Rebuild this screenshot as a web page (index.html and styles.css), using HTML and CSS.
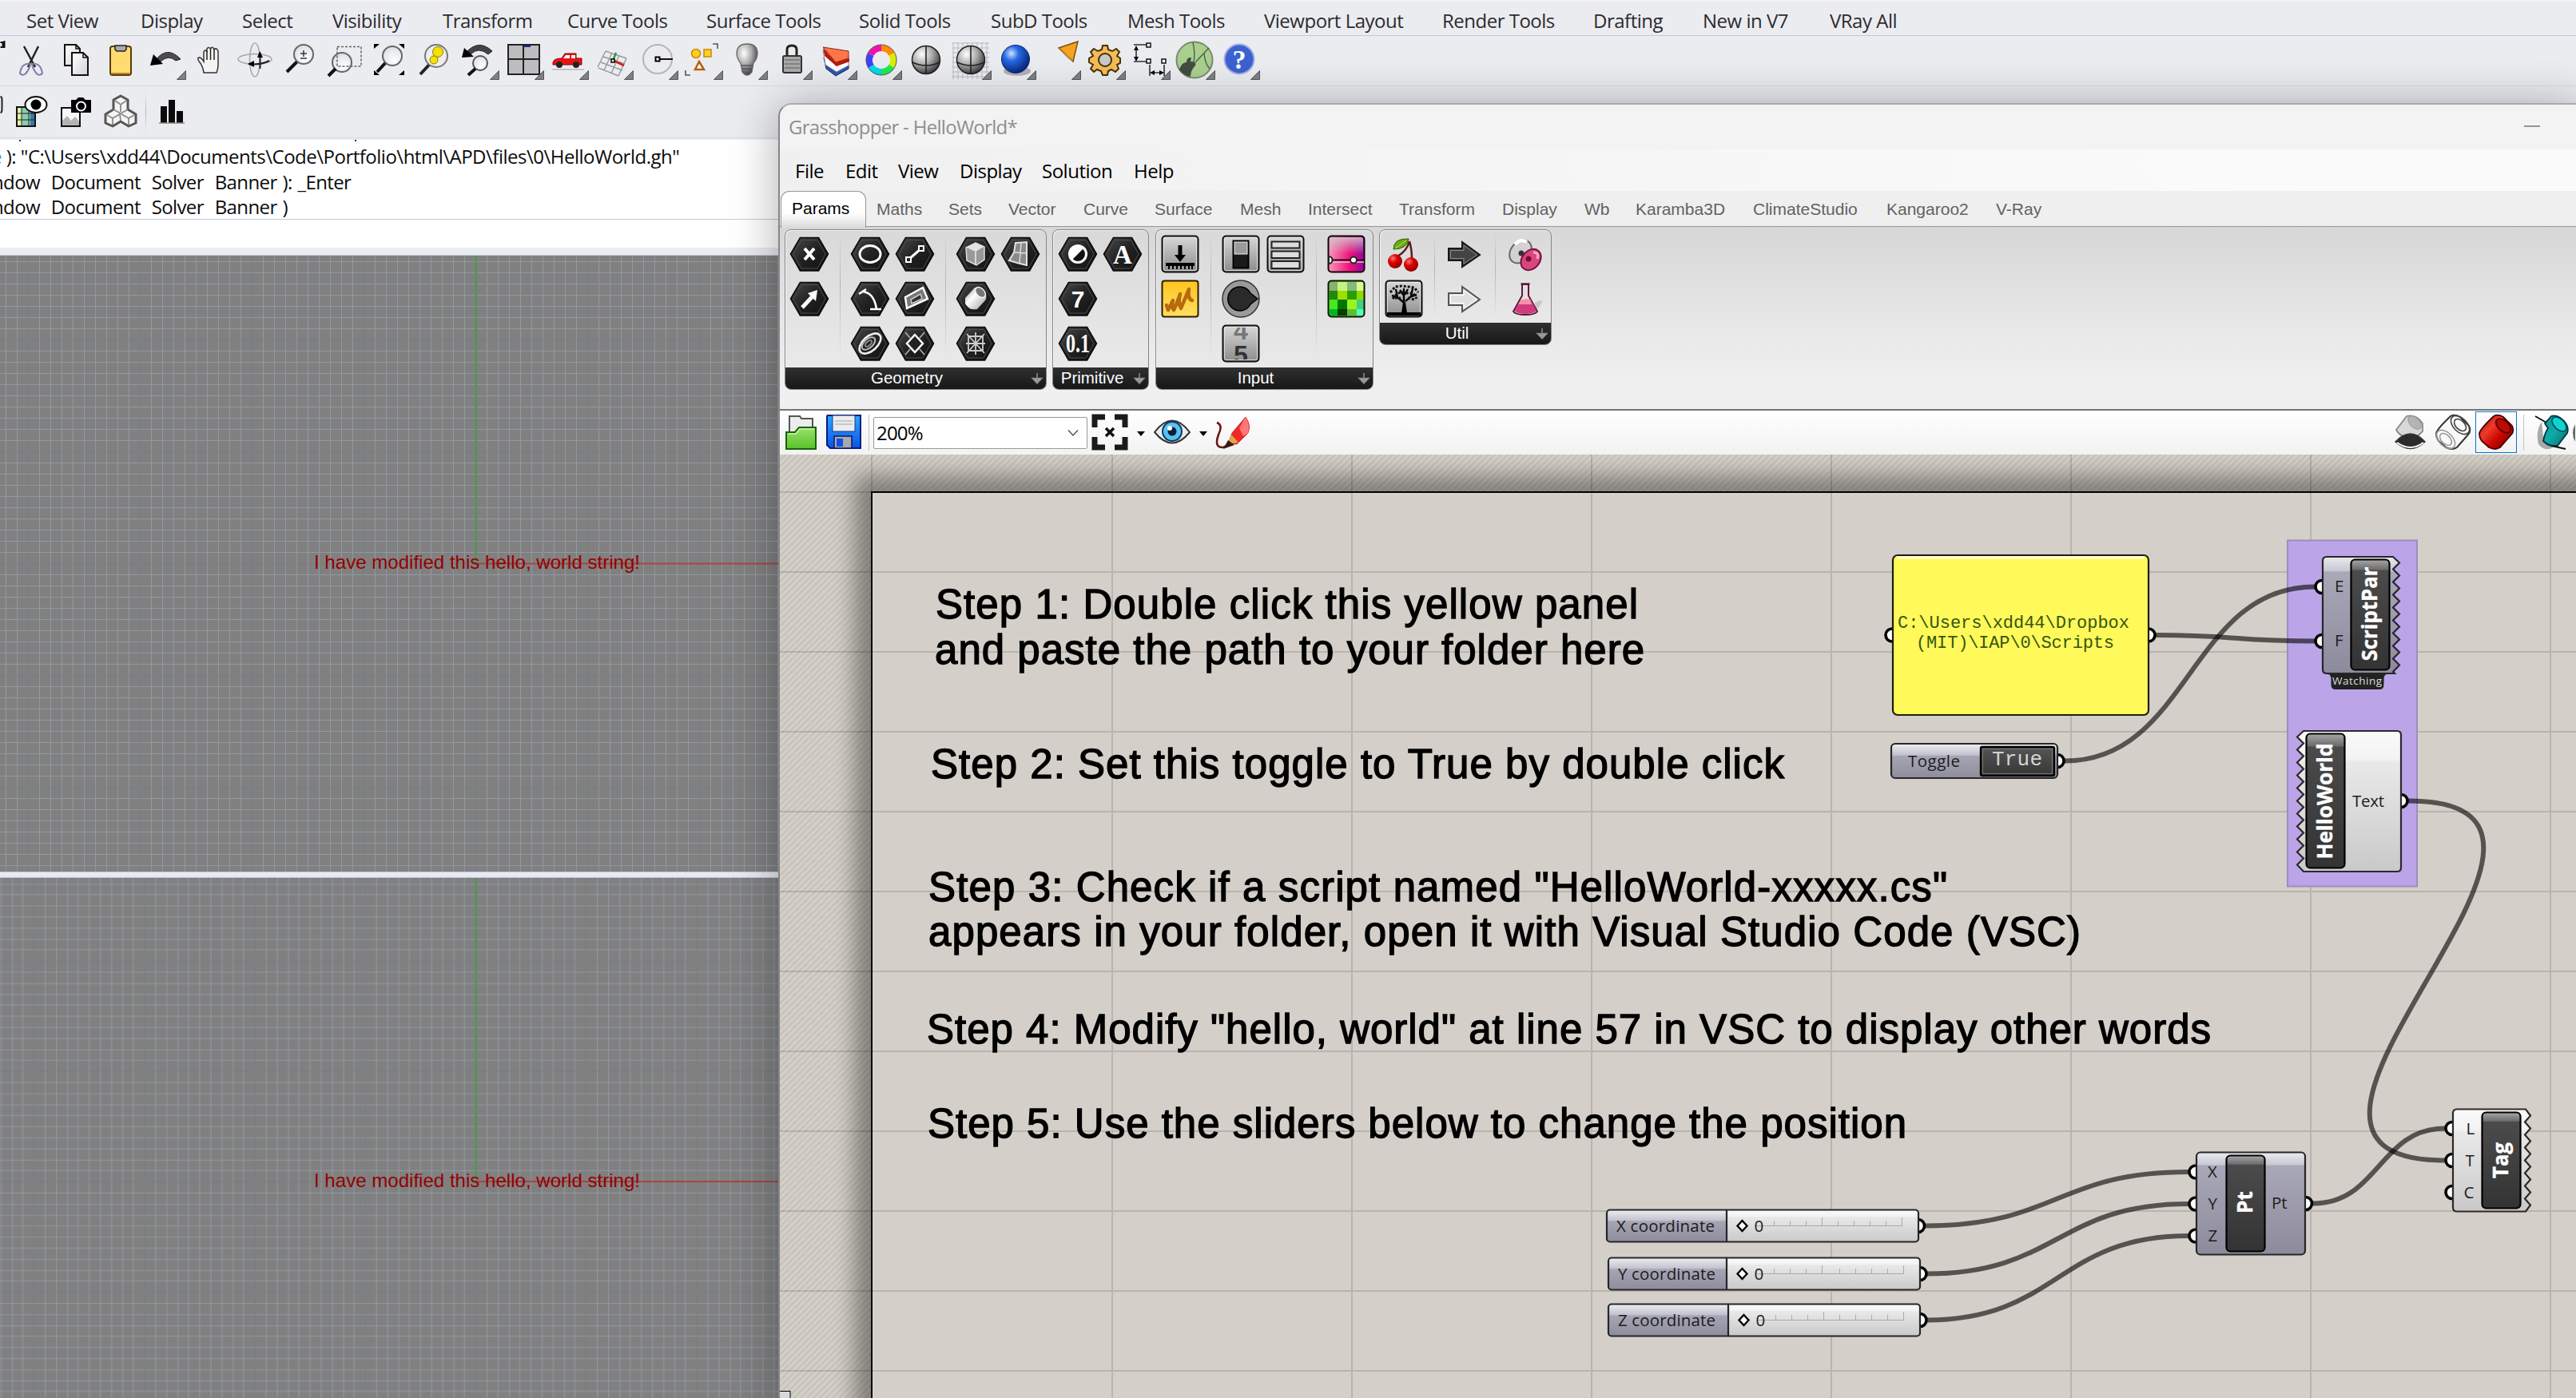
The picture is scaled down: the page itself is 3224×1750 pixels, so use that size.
FILE: index.html
```html
<!DOCTYPE html>
<html lang="en">
<head>
<meta charset="utf-8">
<title>Grasshopper - HelloWorld*</title>
<link rel="stylesheet" href="styles.css">
</head>
<body>
<svg class="defs" aria-hidden="true">
  <defs>
    <linearGradient id="gHex" x1="0" y1="0" x2="1" y2="1"><stop offset="0" stop-color="#4a4a4a"/><stop offset=".5" stop-color="#222"/><stop offset="1" stop-color="#101010"/></linearGradient>
    <linearGradient id="gBtn" x1="0" y1="0" x2="0" y2="1"><stop offset="0" stop-color="#d8d8d8"/><stop offset="1" stop-color="#8c8c8c"/></linearGradient>
    <linearGradient id="gWhite" x1="0" y1="0" x2="1" y2="1"><stop offset="0" stop-color="#8a8a8a"/><stop offset=".4" stop-color="#fff"/><stop offset="1" stop-color="#9a9a9a"/></linearGradient>
    <linearGradient id="gPink" x1="0" y1="0" x2="1" y2="0"><stop offset="0" stop-color="#f39ab8"/><stop offset=".6" stop-color="#f0107c"/><stop offset="1" stop-color="#8c0a9c"/></linearGradient>
    <linearGradient id="gFade" x1="0" y1="0" x2="0" y2="1"><stop offset="0" stop-color="#ccc" stop-opacity=".85"/><stop offset=".5" stop-color="#ccc" stop-opacity="0"/></linearGradient>
    <linearGradient id="gYel" x1="0" y1="0" x2="0" y2="1"><stop offset="0" stop-color="#ffc51e"/><stop offset="1" stop-color="#ffe060"/></linearGradient>
    <linearGradient id="gPaper" x1="0" y1="0" x2="1" y2="1"><stop offset="0" stop-color="#fff"/><stop offset="1" stop-color="#d4d4d4"/></linearGradient>
    <radialGradient id="gLens" cx=".6" cy=".7" r=".7"><stop offset="0" stop-color="#fff"/><stop offset="1" stop-color="#dcdfe2"/></radialGradient>
    <radialGradient id="gBall" cx=".35" cy=".3" r=".75"><stop offset="0" stop-color="#fff"/><stop offset=".5" stop-color="#aaa"/><stop offset="1" stop-color="#333"/></radialGradient>
    <radialGradient id="gBlue" cx=".35" cy=".3" r=".75"><stop offset="0" stop-color="#cfe2ff"/><stop offset=".35" stop-color="#2a6ae6"/><stop offset="1" stop-color="#04206e"/></radialGradient>
    <radialGradient id="gRed" cx=".35" cy=".3" r=".75"><stop offset="0" stop-color="#ff7a70"/><stop offset=".4" stop-color="#de0000"/><stop offset="1" stop-color="#8a0000"/></radialGradient>
    <linearGradient id="gGreen" x1="0" y1="0" x2="0" y2="1"><stop offset="0" stop-color="#9ae06a"/><stop offset="1" stop-color="#5ac22a"/></linearGradient>
    <linearGradient id="gDisk" x1="0" y1="0" x2="0" y2="1"><stop offset="0" stop-color="#2aa6ff"/><stop offset="1" stop-color="#0f52e8"/></linearGradient>
    <linearGradient id="gCylR" x1="0" y1="0" x2="1" y2="1"><stop offset="0" stop-color="#a80400"/><stop offset=".35" stop-color="#ee3a2c"/><stop offset=".6" stop-color="#cc0800"/><stop offset="1" stop-color="#5c0000"/></linearGradient>
    <linearGradient id="gTeal" x1="0" y1="0" x2="1" y2="1"><stop offset="0" stop-color="#0a9a96"/><stop offset=".5" stop-color="#10aaa6"/><stop offset="1" stop-color="#056a68"/></linearGradient>
    <linearGradient id="gLight" x1="0" y1="0" x2="0" y2="1"><stop offset="0" stop-color="#fafafa"/><stop offset=".2" stop-color="#f3f3f3"/><stop offset=".22" stop-color="#e9e9e9"/><stop offset="1" stop-color="#c9c9c9"/></linearGradient>
    <linearGradient id="gBlueGrey" x1="0" y1="0" x2="0" y2="1"><stop offset="0" stop-color="#eaeaf0"/><stop offset=".12" stop-color="#c8c8d2"/><stop offset=".13" stop-color="#a9a8b8"/><stop offset="1" stop-color="#8d8b9b"/></linearGradient>
    <linearGradient id="gBlueGreyS" x1="0" y1="0" x2="0" y2="1"><stop offset="0" stop-color="#eeeef3"/><stop offset=".33" stop-color="#c2c2cd"/><stop offset=".36" stop-color="#a6a5b5"/><stop offset="1" stop-color="#8f8d9c"/></linearGradient>
    <linearGradient id="gCaps" x1="0" y1="0" x2="0" y2="1"><stop offset="0" stop-color="#a8a8a8"/><stop offset=".09" stop-color="#6c6c6c"/><stop offset=".1" stop-color="#4b4b4b"/><stop offset="1" stop-color="#333"/></linearGradient>
    <linearGradient id="gTog" x1="0" y1="0" x2="0" y2="1"><stop offset="0" stop-color="#555"/><stop offset="1" stop-color="#363636"/></linearGradient>
    <pattern id="gridA" x="595" y="705" width="140" height="140" patternUnits="userSpaceOnUse">
      <path d="M14 0V140M28 0V140M42 0V140M56 0V140M70 0V140M84 0V140M98 0V140M112 0V140M126 0V140M0 14H140M0 28H140M0 42H140M0 56H140M0 70H140M0 84H140M0 98H140M0 112H140M0 126H140" transform="translate(.5 .5)" stroke="#9299a2"/>
      <path d="M.5 0V140M0 .5H140" stroke="#797e82"/>
    </pattern>
    <pattern id="gridB" x="595" y="1479" width="138.2" height="138.2" patternUnits="userSpaceOnUse">
      <path d="M14 0V140M28 0V140M42 0V140M55 0V140M69 0V140M83 0V140M97 0V140M111 0V140M124 0V140M0 14H140M0 28H140M0 42H140M0 55H140M0 69H140M0 83H140M0 97H140M0 111H140M0 124H140" transform="translate(.5 .5)" stroke="#9299a2"/>
      <path d="M.5 0V140M0 .5H140" stroke="#797e82"/>
    </pattern>
    <pattern id="hatch" width="8" height="8" patternUnits="userSpaceOnUse">
      <rect width="8" height="8" fill="#d4d0c8"/><path d="M-2 10L10 -2M-2 2L2 -2M6 10L10 6" stroke="#c7c3bb" stroke-width="2.4"/>
    </pattern>
    <filter id="soft" x="-10%" y="-10%" width="120%" height="120%"><feGaussianBlur stdDeviation="13"/></filter>
    <symbol id="hex" viewBox="0 0 56 56"><path d="M4.5 28L16.4 7.500H39.600L51.500 28L39.600 49H16.400Z" fill="url(#gHex)" stroke="#0a0a0a" stroke-width="1.500"/><path d="M8 28L18 10.500H38L48 28L38 46H18Z" fill="none" stroke="#4d4d4d"/></symbol>
    <symbol id="btn" viewBox="0 0 56 56"><rect x="5.500" y="5.500" width="45" height="45" rx="4" fill="url(#gBtn)" stroke="#111" stroke-width="2"/><rect x="7.500" y="7.500" width="41" height="41" rx="2" fill="none" stroke="#f2f2f2" stroke-opacity=".7"/></symbol>
    <symbol id="tri" viewBox="0 0 56 56"><path d="M42.500 51.500H53.500V40.500Z" fill="#808184" stroke="#55565a"/></symbol>
    <symbol id="down" viewBox="0 0 16 16"><path d="M8 1V12M2 7.500H14L8 14Z" stroke="#8e8e8e" stroke-width="1.500" fill="#a2a2a2"/></symbol>
    <clipPath id="rollClip"><rect x="8" y="8" width="40" height="40"/></clipPath>
  </defs>
</svg>

<div class="desktop">
  <div class="rhino">
    <nav class="r-menu">
      <span>Set View</span><span>Display</span><span>Select</span><span>Visibility</span><span>Transform</span><span>Curve Tools</span><span>Surface Tools</span><span>Solid Tools</span><span>SubD Tools</span><span>Mesh Tools</span><span>Viewport Layout</span><span>Render Tools</span><span>Drafting</span><span>New in V7</span><span>VRay All</span>
    </nav>
    <div class="r-bar">
      <svg class="edge" viewBox="0 0 10 56"><path d="M0 5h3v6H0M5 3V12" stroke="#111" stroke-width="2" fill="none"/></svg>
      <svg viewBox="0 0 56 56"><path d="M19 10L33 36M37 10L24 36" stroke="#222" stroke-width="2.500"/><path d="M27 32Q16 30 14 44Q20 50 26 36ZM29 32Q40 30 42 44Q36 50 30 36Z" fill="none" stroke="#7c80a8" stroke-width="2"/></svg>
      <svg viewBox="0 0 56 56"><path d="M14 8H28L33 13V34H14Z" fill="url(#gPaper)" stroke="#111" stroke-width="2"/><path d="M23 18H37L43 24V46H23Z" fill="url(#gPaper)" stroke="#111" stroke-width="2"/><path d="M28 8V13H33M37 18V24H43" fill="none" stroke="#111" stroke-width="1.500"/></svg>
      <svg viewBox="0 0 56 56"><rect x="15" y="10" width="26" height="36" rx="3" fill="#ffdb70" stroke="#5a3c08" stroke-width="2"/><path d="M16 44H40" stroke="#b8862a" stroke-width="2"/><path d="M21 9H35V14L33 16H23L21 14Z" fill="#aaa" stroke="#222" stroke-width="1.500"/></svg>
      <svg viewBox="0 0 56 56"><path d="M15 28Q30 8 47 26L41 28Q32 20 22 29Z" fill="#4c4c4c" stroke="#222"/><path d="M9 34L13 20L25 32Z" fill="#000"/><use href="#tri"/></svg>
      <svg viewBox="0 0 56 56"><path d="M20 43Q19 35 15 30Q11 25 14 24Q17 24 20 29V17Q22 13 24 17V13Q26 10 28.500 13Q31 9 33 14Q36 11 38 16V33Q38 38 36 43Z" fill="#f4f4f2" stroke="#333" stroke-width="1.500"/><path d="M24 16V27M28.500 13V27M33 14V27" stroke="#222" stroke-width="1.500"/></svg>
      <svg viewBox="0 0 56 56"><ellipse cx="28" cy="26" rx="21" ry="6.500" fill="none" stroke="#aaa" stroke-width="1.600"/><ellipse cx="28" cy="27" rx="6.500" ry="21" fill="none" stroke="#aaa" stroke-width="1.600"/><path d="M34.500 18V38M20 32Q34 34 46 28" fill="none" stroke="#222" stroke-width="2"/><path d="M31 24L34 16L38 24ZM19 32L27 28V36Z" fill="#000"/></svg>
      <svg viewBox="0 0 56 56"><path d="M25 29L12 42" stroke="#111" stroke-width="4"/><circle cx="33" cy="20" r="12" fill="url(#gLens)" stroke="#666" stroke-width="2"/><path d="M29 19H37M33 15V23M29 25H37" stroke="#333" stroke-width="1.500"/></svg>
      <svg viewBox="0 0 56 56"><circle cx="25" cy="30" r="12" fill="url(#gLens)" stroke="#666" stroke-width="2"/><path d="M17 38L8 47" stroke="#111" stroke-width="4"/><path d="M19 10.500H49V35H19Z" fill="none" stroke="#666" stroke-width="1.600" stroke-dasharray="3 2"/></svg>
      <svg viewBox="0 0 56 56"><path d="M24 30L13 42" stroke="#111" stroke-width="4"/><circle cx="32" cy="22" r="12" fill="url(#gLens)" stroke="#666" stroke-width="2"/><path d="M9 7H16L9 13ZM47 7H40L47 13ZM9 46H16L9 40ZM47 46H40L47 40Z" fill="#000"/></svg>
      <svg viewBox="0 0 56 56"><path d="M24 31L11 45" stroke="#222" stroke-width="4"/><circle cx="31" cy="22" r="14" fill="#eee" stroke="#777" stroke-width="2"/><circle cx="33" cy="17" r="6.500" fill="#f6e000" stroke="#8a8000"/><circle cx="28" cy="27" r="5" fill="#f6e000" stroke="#8a8000"/></svg>
      <svg viewBox="0 0 56 56"><path d="M12 18Q28 0 45 16L40 20Q28 10 18 20Z" fill="#444" stroke="#222"/><path d="M7 24L10 12L22 23Z"/><circle cx="30" cy="31" r="9" fill="url(#gLens)" stroke="#555" stroke-width="2"/><path d="M24 38L15 46" stroke="#111" stroke-width="4"/><use href="#tri"/></svg>
      <svg viewBox="0 0 56 56"><rect x="9" y="8" width="39" height="37" fill="#bdbdbf" stroke="#222" stroke-width="2"/><path d="M28 8V45M9 26H48" stroke="#222" stroke-width="2"/><path d="M29 10H37" stroke="#1028a0" stroke-width="2"/><use href="#tri"/></svg>
      <svg viewBox="0 0 56 56"><path d="M9 31Q9 25 20 25L24 19H38V25H45V33H9Z" fill="#e81414" stroke="#8a0000"/><path d="M25 21H30V25H22ZM32 21H37V25H32Z" fill="#fff"/><circle cx="17" cy="33" r="4" fill="#222"/><circle cx="38" cy="33" r="4" fill="#222"/><path d="M8 39H48" stroke="#c4c4c8" stroke-width="2"/><use href="#tri"/></svg>
      <svg viewBox="0 0 56 56"><path d="M19 16L45 25M16 23L43 32M13 30L40 40M10 37L35 47M19 16L9 36M27 18L17 40M36 21L26 44M45 25L35 47" stroke="#999" stroke-width="1.400"/><path d="M29 28L42 34" stroke="#d02020" stroke-width="2.500"/><path d="M28 28L32 18" stroke="#20a040" stroke-width="2.500"/><rect x="26" y="26" width="4" height="4" fill="#fff" stroke="#000" stroke-width="1.500"/><use href="#tri"/></svg>
      <svg viewBox="0 0 56 56"><circle cx="28" cy="26" r="18" fill="none" stroke="#b5b5b8" stroke-width="2"/><path d="M30 26H47" stroke="#111" stroke-width="2"/><rect x="25.500" y="23.500" width="5" height="5" fill="#fff" stroke="#000" stroke-width="2"/><use href="#tri"/></svg>
      <svg viewBox="0 0 56 56"><circle cx="20" cy="19" r="5.500" fill="#ffd21e" stroke="#c8860a" stroke-width="1.500"/><rect x="30" y="14" width="9" height="9" fill="#ffd21e" stroke="#c8860a" stroke-width="1.500"/><path d="M19 39L24 29L30 39Z" fill="#fff" stroke="#b85c10" stroke-width="2.500"/><path d="M41 7H47V13M7 40V46H13" fill="none" stroke="#555" stroke-width="1.600"/><use href="#tri"/></svg>
      <svg viewBox="0 0 56 56"><path d="M15 19Q15 7 28 7Q41 7 41 19Q41 25 36 31L34 42Q28 50 22 42L20 31Q15 25 15 19Z" fill="url(#gBall)" stroke="#666" stroke-width="1.300"/><path d="M21 34H35M22 38H34" stroke="#555" stroke-width="1.500"/><use href="#tri"/></svg>
      <svg viewBox="0 0 56 56"><path d="M22 24V14Q22 9 28 9Q34 9 34 14V24" fill="none" stroke="#222" stroke-width="3"/><rect x="17" y="22" width="23" height="21" rx="2" fill="#a8a8a8" stroke="#333" stroke-width="2"/><path d="M19 27H38M19 32H38M19 37H38" stroke="#777" stroke-width="1.500"/><use href="#tri"/></svg>
      <svg viewBox="0 0 56 56"><path d="M12 24L27 40L43 34V38L27 47L15 38Z" fill="#2a55b8" stroke="#112a70"/><path d="M11 15L27 34L43 29V34L28 42L14 33Z" fill="#fff" stroke="#888"/><path d="M11 12L27 30L44 25V29L28 35L13 22Z" fill="#b81a10"/><path d="M11 11L43 16V25L27 30Z" fill="#ff7648" stroke="#8a2a14"/><use href="#tri"/></svg>
      <svg viewBox="0 0 56 56"><g fill="none" stroke-width="8"><path d="M28 12A15 15 0 0 1 41 20" stroke="#ff8a00"/><path d="M41 20A15 15 0 0 1 41 35" stroke="#d8f000"/><path d="M41 35A15 15 0 0 1 28 42" stroke="#20e850"/><path d="M28 42A15 15 0 0 1 15 35" stroke="#00d8e8"/><path d="M15 35A15 15 0 0 1 15 20" stroke="#4040ff"/><path d="M15 20A15 15 0 0 1 28 12" stroke="#f010b0"/></g><circle cx="28" cy="27" r="19" fill="none" stroke="#555"/><use href="#tri"/></svg>
      <svg viewBox="0 0 56 56"><circle cx="28" cy="27" r="17.500" fill="url(#gBall)" stroke="#222" stroke-width="1.500"/><path d="M28 10V44M11 30Q28 38 45 30" fill="none" stroke="#222" stroke-width="1.600"/></svg>
      <svg viewBox="0 0 56 56"><path d="M6 5V51M12 5V51M18 5V51M24 5V51M30 5V51M36 5V51M42 5V51M48 5V51M5 6H51M5 12H51M5 18H51M5 24H51M5 30H51M5 36H51M5 42H51M5 48H51" stroke="#b8b8bc"/><circle cx="28" cy="27" r="17.500" fill="url(#gBall)" stroke="#222" stroke-width="1.500"/><path d="M28 10V44M11 30Q28 38 45 30" fill="none" stroke="#222" stroke-width="1.600"/><use href="#tri"/></svg>
      <svg viewBox="0 0 56 56"><ellipse cx="30" cy="41" rx="17" ry="6" fill="#000" opacity=".25"/><circle cx="28" cy="26" r="17.500" fill="url(#gBlue)" stroke="#0a2a78"/><use href="#tri"/></svg>
      <svg viewBox="0 0 56 56"><path d="M26 12L50 4L44 29Z" fill="#f7a21e" stroke="#7a5010" stroke-width="1.500"/><path d="M26 12L44 29L37 24Z" fill="#fff8e0" stroke="#a08040"/><use href="#tri"/></svg>
      <svg viewBox="0 0 56 56"><path d="M25 9H31L32 14L37 16L42 13L46 17L43 22L47 25V31L43 33L45 38L41 42L36 39L32 41L31 46H25L23 41L18 39L14 42L10 38L13 33L8 30V25L13 22L10 17L14 13L19 16L24 14Z" fill="#f2bc58" stroke="#4a3008" stroke-width="2"/><circle cx="28" cy="27" r="8" fill="#c9c9cc" stroke="#4a3008" stroke-width="2"/><use href="#tri"/></svg>
      <svg viewBox="0 0 56 56"><path d="M8 8H26M8 29H26M11 12V26M28 33V47M46 33V47M33 43H42" stroke="#333" stroke-width="1.600" fill="none"/><path d="M8 15L11 9L14 15ZM8 23L11 29L14 23ZM34 40L28 43L34 46ZM40 40L46 43L40 46Z"/><path d="M24 6h5v5h-5ZM24 26h5v5h-5ZM43 26h5v5h-5Z" fill="#fff" stroke="#111" stroke-width="1.500"/><use href="#tri"/></svg>
      <svg viewBox="0 0 56 56"><circle cx="28" cy="27" r="22.500" fill="#a9cf8e" stroke="#7a8a72" stroke-width="2"/><path d="M9 39Q12 30 18 30Q18 23 24 24L23 29Q31 29 29 34Q23 40 23 48Q13 46 9 39Z" fill="#444c40"/><path d="M26 5Q29 18 27 30M29 30L46 12M40 18Q41 32 47 38" fill="none" stroke="#4f6148" stroke-width="1.400"/><use href="#tri"/></svg>
      <svg viewBox="0 0 56 56"><circle cx="28" cy="26" r="18.500" fill="#3c62d0" stroke="#a0aee4" stroke-width="2"/><text x="28" y="38" class="help-q">?</text><use href="#tri"/></svg>
    </div>
    <div class="r-bar r-bar2">
      <svg class="edge" viewBox="0 0 10 56"><path d="M0 8Q2 8 2 12V24Q2 28 0 28" stroke="#222" stroke-width="2" fill="none"/></svg>
      <svg viewBox="0 0 56 56"><rect x="10" y="21" width="23" height="24" fill="#8accb0" stroke="#111" stroke-width="2"/><path d="M11 22H16V44H11Z" fill="#e4f0a0"/><path d="M27 22H32V44H27Z" fill="#3a78a8"/><path d="M16 21V45M25 21V45M10 29H33M10 37H33" stroke="#222"/><ellipse cx="34" cy="18" rx="13.500" ry="10" fill="#fff" stroke="#111" stroke-width="2"/><circle cx="34" cy="18" r="6.500"/></svg>
      <svg viewBox="0 0 56 56"><rect x="10" y="22" width="23" height="23" fill="#f6f6f6" stroke="#111" stroke-width="2"/><path d="M11 44V38L17 32L22 38L27 33L32 39V44Z" fill="#b4b4b4"/><path d="M22 12H28L31 9H37L40 12H47V28H22Z"/><circle cx="34.500" cy="20" r="5.500" stroke="#fff" stroke-width="2"/></svg>
      <svg viewBox="0 0 56 56"><path d="M28 7L37 12V24L47 30V41L38 45L28 39L18 45L9 41V30L19 24V12Z" fill="#f4f4f5" stroke="#555" stroke-width="3" stroke-linejoin="round"/><path d="M21 13L28 18L35 13M28 18V27M11 31L18 35L27 30L28 38M45 31L38 35L29 30M18 35V43M38 35V43M19 24L28 29L37 24" fill="none" stroke="#8a8a8a" stroke-width="1.800"/></svg>
      <i class="r-sep"></i>
      <svg viewBox="0 0 56 56"><path d="M15 20H23V41H15ZM25 12H33V41H25ZM35 26H43V41H35Z" fill="#0a0a0a"/><path d="M13 41H45" stroke="#888" stroke-width="1.500"/></svg>
    </div>
    <div class="r-cmd">
      <div class="r-hist">
        <i class="scrap"></i>
        <p class="path"><span class="blue">e</span> ): "C:\Users\xdd44\Documents\Code\Portfolio\html\APD\files\0\HelloWorld.gh"</p>
        <p class="opts">ndow  Document  Solver  Banner ): _Enter</p>
        <p class="opts">ndow  Document  Solver  Banner )</p>
      </div>
      <div class="r-prompt"></div>
    </div>
    <svg class="r-view" viewBox="0 320 976 1430">
      <rect y="320" width="976" height="772" fill="#808080"/>
      <rect y="320" width="976" height="772" fill="url(#gridA)"/>
      <path d="M595.500 320V705" stroke="#469846" stroke-width="2"/><path d="M595 705.500H976" stroke="#a64646" stroke-width="2"/>
      <text x="393" y="712" textLength="408" lengthAdjust="spacingAndGlyphs">I have modified this hello, world string!</text>
      <rect y="1091" width="976" height="8" fill="#e7eaf0"/><path d="M0 1091.500H976M0 1098.500H976" stroke="#bcc5da"/>
      <rect y="1099" width="976" height="651" fill="#808080"/>
      <rect y="1099" width="976" height="651" fill="url(#gridB)"/>
      <path d="M595.500 1099V1479" stroke="#469846" stroke-width="2"/><path d="M595 1479H976" stroke="#a64646" stroke-width="2"/>
      <text x="393" y="1486" textLength="408" lengthAdjust="spacingAndGlyphs">I have modified this hello, world string!</text>
    </svg>
  </div>

  <div class="gh">
    <header class="gh-title"><span>Grasshopper - HelloWorld*</span><i class="min"></i></header>
    <nav class="gh-menu"><span>File</span><span>Edit</span><span>View</span><span>Display</span><span>Solution</span><span>Help</span></nav>
    <nav class="gh-tabs"><b>Params</b><span>Maths</span><span>Sets</span><span>Vector</span><span>Curve</span><span>Surface</span><span>Mesh</span><span>Intersect</span><span>Transform</span><span>Display</span><span>Wb</span><span>Karamba3D</span><span>ClimateStudio</span><span>Kangaroo2</span><span>V-Ray</span></nav>
    <div class="ribbon">
      <section class="group">
        <div class="cells">
          <div class="col">
            <svg viewBox="0 0 56 56"><use href="#hex"/><path d="M22 21L34 35M34 21L22 35" stroke="#fff" stroke-width="4"/></svg>
            <svg viewBox="0 0 56 56"><use href="#hex"/><path d="M19 39L32 25" stroke="#fff" stroke-width="5"/><path d="M26 21L38 17L36 31Z" fill="#fff"/></svg>
          </div><i></i>
          <div class="col two">
            <svg viewBox="0 0 56 56"><use href="#hex"/><ellipse cx="28" cy="28" rx="13" ry="10.500" fill="none" stroke="#fff" stroke-width="3"/></svg>
            <svg viewBox="0 0 56 56"><use href="#hex"/><path d="M18 19Q33 20 36 41M28 41H42M14 22L23 16" fill="none" stroke="#fff" stroke-width="2.600"/></svg>
            <svg viewBox="0 0 56 56"><use href="#hex"/><ellipse cx="28" cy="28" rx="16" ry="9" transform="rotate(-42 28 28)" fill="none" stroke="#eee" stroke-width="2.600"/><ellipse cx="26" cy="28" rx="10" ry="5.500" transform="rotate(-42 26 28)" fill="none" stroke="#bbb" stroke-width="2"/><ellipse cx="26" cy="28" rx="5" ry="2.500" transform="rotate(-42 26 28)" fill="none" stroke="#999" stroke-width="1.500"/></svg>
            <svg viewBox="0 0 56 56"><use href="#hex"/><path d="M20 35L36 21" stroke="#fff" stroke-width="3"/><path d="M33 18h6v6h-6ZM17 32h6v6h-6Z" fill="#222" stroke="#fff" stroke-width="2"/></svg>
            <svg viewBox="0 0 56 56"><use href="#hex"/><path d="M16 26L38 14L44 28L18 40Z" fill="#777" stroke="#fff" stroke-width="2.500"/><path d="M23 29L35 22L37 28L24 34Z" fill="#333" stroke="#ccc" stroke-width="1.500"/></svg>
            <svg viewBox="0 0 56 56"><use href="#hex"/><path d="M28 17L38 28L28 39L18 28Z" fill="#222" stroke="#fff" stroke-width="2.500"/><path d="M16 14L22 21M40 14L34 21M16 42L22 35M40 42L34 35" stroke="#aaa" stroke-width="1.800"/></svg>
          </div><i></i>
          <div class="col two">
            <svg viewBox="0 0 56 56"><use href="#hex"/><path d="M16 20L28 14L39 19V35L29 42L17 36Z" fill="#999" stroke="#ddd" stroke-width="1.500"/><path d="M17 20L28 25L38 19L28 14Z" fill="#e4e4e4"/><path d="M28 25V41" stroke="#eee" stroke-width="1.500"/></svg>
            <svg viewBox="0 0 56 56"><use href="#hex"/><path d="M15 27L27 14Q35 12 41 22Q42 27 40 30L30 41Q20 43 15 34Z" fill="url(#gWhite)"/><ellipse cx="34" cy="20" rx="7.500" ry="5" transform="rotate(45 34 20)" fill="#777" stroke="#f4f4f4" stroke-width="1.500"/></svg>
            <svg viewBox="0 0 56 56"><use href="#hex"/><path d="M19 19H37V37H19ZM28 14V42M16 28H40M17 16L39 40M39 16L17 40" fill="none" stroke="#ccc" stroke-width="1.800"/></svg>
            <svg viewBox="0 0 56 56"><use href="#hex"/><path d="M22 14L36 13V42Q26 40 14 36L20 26Z" fill="#8a8a8a" stroke="#e4e4e4" stroke-width="2"/><path d="M20 26L36 27M29 14L27 39" stroke="#ddd" stroke-width="1.500" fill="none"/></svg>
          </div>
        </div>
        <footer>Geometry<svg viewBox="0 0 16 16"><use href="#down"/></svg></footer>
      </section>
      <section class="group">
        <div class="cells"><div class="col two">
          <svg viewBox="0 0 56 56"><use href="#hex"/><circle cx="28" cy="28" r="10.500" fill="#111" stroke="#fff" stroke-width="3"/><path d="M36 20A11 11 0 0 1 20 36Z" fill="#fff" transform="rotate(180 28 28)"/></svg>
          <svg viewBox="0 0 56 56"><use href="#hex"/><text x="28" y="39" class="glyph">7</text></svg>
          <svg viewBox="0 0 56 56"><use href="#hex"/><text x="28" y="39" class="glyph serif" textLength="30" lengthAdjust="spacingAndGlyphs">0.1</text></svg>
          <svg viewBox="0 0 56 56"><use href="#hex"/><text x="28" y="40" class="glyph serif">A</text></svg>
        </div></div>
        <footer>Primitive<svg viewBox="0 0 16 16"><use href="#down"/></svg></footer>
      </section>
      <section class="group">
        <div class="cells">
          <div class="col">
            <svg viewBox="0 0 56 56"><use href="#btn"/><path d="M28 17V32" stroke="#000" stroke-width="5"/><path d="M21 29H35L28 38ZM10 39H46V43H10Z"/><path d="M14 43V47M19 43V47M24 43V47M29 43V47M34 43V47M39 43V47M43 43V47" stroke="#000" stroke-width="2"/></svg>
            <svg viewBox="0 0 56 56"><rect x="5.500" y="5.500" width="45" height="45" rx="3" fill="url(#gYel)" stroke="#2a1c00" stroke-width="2"/><path d="M11 36L13 42Q16 36 19 30Q17 38 20 42Q24 34 28 22Q25 34 29 40Q34 28 39 16Q37 28 43 30" fill="none" stroke="#b86a10" stroke-width="4.500" stroke-linejoin="round" stroke-linecap="round"/></svg>
          </div><i></i>
          <div class="col two">
            <svg viewBox="0 0 56 56"><use href="#btn"/><rect x="18.500" y="11.500" width="19" height="34" fill="#1a1a1a" stroke="#000" stroke-width="2"/><rect x="20" y="13" width="16" height="15" fill="#9a9a9a" stroke="#eee"/></svg>
            <svg viewBox="0 0 56 56"><circle cx="28" cy="28" r="23" fill="#9a9a9a" stroke="#333" stroke-width="1.500"/><path d="M49 28L40 35A15 15 0 1 1 40 21Z" fill="#2a2a2a" stroke="#000" stroke-width="1.500"/></svg>
            <svg viewBox="0 0 56 56"><use href="#btn"/><g clip-path="url(#rollClip)"><text x="28" y="23" class="roll dim">4</text><text x="28" y="53" class="roll">5</text></g></svg>
            <svg viewBox="0 0 56 56"><use href="#btn"/><path d="M10.500 12.500H45.500V20.500H10.500ZM10.500 24.500H45.500V33H10.500ZM10.500 37H45.500V46H10.500Z" fill="#ddd" stroke="#222" stroke-width="2"/></svg>
          </div><i></i>
          <div class="col">
            <svg viewBox="0 0 56 56"><rect x="5.500" y="5.500" width="45" height="45" rx="4" fill="url(#gPink)" stroke="#1a0010" stroke-width="2"/><rect x="7" y="7" width="42" height="42" rx="3" fill="url(#gFade)"/><path d="M6 35.500H50" stroke="#310018" stroke-width="2"/><path d="M6 38H50" stroke="#fbd" stroke-width="1.500"/><circle cx="37" cy="35.500" r="4" fill="#fff" stroke="#222" stroke-width="2"/><path d="M6 31A4 4 0 0 1 6 40Z" fill="#fff" stroke="#222" stroke-width="2"/></svg>
            <svg viewBox="0 0 56 56"><rect x="5.500" y="5.500" width="45" height="45" rx="4" fill="#7fd030"/><path d="M7 18h10v11H7Z" fill="#1c8a0a"/><path d="M17 18h12v11H17Z" fill="#9be000"/><path d="M29 18h12v11H29Z" fill="#2aa000"/><path d="M41 18h9v11h-9Z" fill="#90dc00"/><path d="M7 29h10v12H7Z" fill="#46e81e"/><path d="M17 29h12v12H17Z" fill="#007800"/><path d="M29 29h12v12H29Z" fill="#9af41e"/><path d="M41 29h9v12h-9Z" fill="#40d080"/><path d="M7 41h10v8H7Z" fill="#00b428"/><path d="M17 41h12v8H17Z" fill="#0c3a00"/><path d="M29 41h12v8H29Z" fill="#5cc034"/><path d="M41 41h9v8h-9Z" fill="#54ffc4"/><path d="M7 7h10v11H7Z" fill="#88b070"/><path d="M17 7h12v11H17Z" fill="#c2f480"/><path d="M29 7h12v11H29Z" fill="#88b880"/><path d="M41 7h9v11h-9Z" fill="#d8fa90"/><rect x="5.500" y="5.500" width="45" height="45" rx="4" fill="none" stroke="#0a1a00" stroke-width="2"/></svg>
          </div>
        </div>
        <footer>Input<svg viewBox="0 0 16 16"><use href="#down"/></svg></footer>
      </section>
      <section class="group short">
        <div class="cells">
          <div class="col">
            <svg viewBox="0 0 56 56"><path d="M35 12Q32 24 20 31M35 12Q38 22 38 34" fill="none" stroke="#5a1a1a" stroke-width="2.500"/><path d="M15 22Q15 8 34 9Q32 22 15 22Z" fill="#6aac10" stroke="#2a5a08"/><path d="M17 21L31 11" stroke="#bde060"/><circle cx="17" cy="37" r="9" fill="url(#gRed)"/><circle cx="37" cy="41" r="9" fill="url(#gRed)"/></svg>
            <svg viewBox="0 0 56 56"><use href="#btn"/><path d="M7 45H49V49H7Z"/><path d="M25 46L27 32H30L32 46Z"/><path d="M28 34V15M27 32L20 26L13 24M20 26L18 16M30 31L37 25L44 23M37 25L39 15M28 24L23 17M29 23L33 16" stroke="#000" stroke-width="2.400" fill="none"/><path d="M11 20L17 13L25 12L34 13L41 14L46 20M14 28L20 21L25 20L33 21L40 21L44 28M17 27L24 27M33 27L41 29" fill="none" stroke="#111" stroke-width="3" stroke-dasharray="3 2"/></svg>
          </div><i></i>
          <div class="col">
            <svg viewBox="0 0 56 56"><path d="M8 21H25V13L47 29L25 44V36H8Z" fill="#444" stroke="#181818" stroke-width="2"/><path d="M10.500 23.500H27V17L43.500 29L27 40V33.500H10.500Z" fill="none" stroke="#888"/></svg>
            <svg viewBox="0 0 56 56"><path d="M8 21H25V13L47 29L25 44V36H8Z" fill="#e0e0e0" stroke="#555" stroke-width="2"/><path d="M10.500 23.500H27V17L43.500 29L27 40V33.500H10.500Z" fill="none" stroke="#fff"/></svg>
          </div><i></i>
          <div class="col">
            <svg viewBox="0 0 56 56"><ellipse cx="22" cy="25" rx="16" ry="12" transform="rotate(-50 22 25)" fill="#d2d2d2" stroke="#666" stroke-width="2"/><path d="M15 16Q22 8 30 13" stroke="#fff" stroke-width="4" fill="none"/><circle cx="23" cy="27" r="3.500" fill="#333"/><ellipse cx="35" cy="35" rx="14.500" ry="11" transform="rotate(-50 35 35)" fill="#d8467e" stroke="#7a1040" stroke-width="2"/><circle cx="32" cy="34" r="3.500" fill="#7a0a38"/><path d="M38 26Q46 26 43 34" stroke="#fac" stroke-width="3" fill="none"/></svg>
            <svg viewBox="0 0 56 56"><path d="M40 33Q52 26 48 34L40 46Z" fill="#bbb" opacity=".7"/><path d="M24 10H32V24L43 44Q40 48 28 48Q16 48 13 44L24 24Z" fill="#e8dce2" stroke="#5a1c3c" stroke-width="2"/><path d="M22 30Q28 33 34 28L42 43Q38 47 28 47Q18 47 14.500 43Z" fill="#d03c7c"/><path d="M22 30Q28 27 34 29L36 35H19Z" fill="#f890ac"/><path d="M22.500 9.500H33.500" stroke="#5a1c3c" stroke-width="2.500"/></svg>
          </div>
        </div>
        <footer>Util<svg viewBox="0 0 16 16"><use href="#down"/></svg></footer>
      </section>
    </div>
    <div class="gh-bar">
      <svg class="ic" viewBox="0 0 46 46"><path d="M8 3H21L23 6H37V26H8Z" fill="#ececec" stroke="#555" stroke-width="2"/><path d="M4 23H15L20 17H41V44H4Z" fill="url(#gGreen)" stroke="#14640c" stroke-width="2"/><path d="M6 25H16L21 19H39" fill="none" stroke="#cff0a8" stroke-width="1.500"/></svg>
      <svg class="ic save" viewBox="0 0 46 46"><path d="M2 3Q2 2 3 2H44V43H6L2 39Z" fill="url(#gDisk)" stroke="#04207a" stroke-width="2"/><rect x="9" y="2" width="28" height="20" fill="#ececec" stroke="#1a3a9a"/><path d="M12 9H34M12 13H34" stroke="#c8c8c8" stroke-width="2"/><rect x="11" y="28" width="22" height="15" fill="#a8a8ac" stroke="#0a1a60" stroke-width="1.500"/><rect x="14" y="31" width="8" height="10" fill="#1050e8"/></svg>
      <i class="gsep"></i>
      <div class="combo"><span>200%</span><svg viewBox="0 0 16 10"><path d="M2 1.500L8 8L14 1.500" fill="none" stroke="#555" stroke-width="1.500"/></svg></div>
      <svg class="ic ext" viewBox="0 0 46 46"><path d="M4 17V4H17M29 4H42V17M42 29V42H29M17 42H4V29" fill="none" stroke="#1a1a1a" stroke-width="7"/><path d="M18 18L28 28M28 18L18 28" stroke="#111" stroke-width="3.500"/></svg>
      <i class="arr"></i>
      <svg class="ic" viewBox="0 0 46 46"><path d="M1 23Q23 -6 45 23Q23 50 1 23Z" fill="#e8eef0" stroke="#333" stroke-width="2"/><circle cx="23" cy="22" r="12" fill="#5cc0ee" stroke="#0a3a6a" stroke-width="2"/><circle cx="23" cy="22" r="5.500" fill="#04203a"/><circle cx="20" cy="18" r="3" fill="#fff"/></svg>
      <i class="arr"></i>
      <svg class="ic brush" viewBox="0 0 46 46"><path d="M3 11Q11 14 5 26Q-1 43 11 42Q15 41 18 36" fill="none" stroke="#6a1410" stroke-width="2.600"/><path d="M17 37L22 24L39 4Q46 14 42 24L28 38Z" fill="#ee2a26" stroke="#c01010" stroke-width=".8"/><path d="M31 18L39 4Q45 14 42 24L36 28Z" fill="#f77"/><path d="M16 38L21 26L30 36Z" fill="#e0a848"/><path d="M11 44L17 33L25 39Z" fill="#3a1a10"/></svg>
      <span class="push"></span>
      <svg class="ic" viewBox="0 0 46 46"><path d="M5 20L18 3Q30 0 38 12V22L28 32Q10 30 5 20Z" fill="#d8d8d8" stroke="#888" stroke-width="1.800"/><ellipse cx="28" cy="11" rx="10" ry="6" transform="rotate(45 28 11)" fill="#b4b4b4" stroke="#999"/><path d="M4 35Q23 52 41 35Q23 15 4 35Z" fill="#2c2c2c" stroke="#333" stroke-width="1.500"/><path d="M6 36Q23 48 39 36" fill="none" stroke="#fff" stroke-width="2"/></svg>
      <svg class="ic wire" viewBox="0 0 46 46"><path d="M2 25Q2 20 20 3Q25 0 32 4L43 15Q46 22 42 26L28 42Q22 46 14 42L5 34Q2 30 2 25Z" fill="#fafafa" stroke="#333" stroke-width="2"/><ellipse cx="32" cy="14" rx="14" ry="8.500" transform="rotate(45 32 14)" fill="none" stroke="#444" stroke-width="1.600"/><ellipse cx="32" cy="14" rx="9" ry="5.500" transform="rotate(45 32 14)" fill="none" stroke="#444" stroke-width="1.600"/><ellipse cx="14" cy="32" rx="14" ry="8.500" transform="rotate(45 14 32)" fill="none" stroke="#999" stroke-width="1.600"/><ellipse cx="14" cy="32" rx="9" ry="5.500" transform="rotate(45 14 32)" fill="none" stroke="#999" stroke-width="1.600"/></svg>
      <span class="sel"><svg class="ic" viewBox="0 0 46 46"><path d="M2 25Q2 20 20 3Q25 0 32 4L43 15Q46 22 42 26L28 42Q22 46 14 42L5 34Q2 30 2 25Z" fill="url(#gCylR)" stroke="#4a0000" stroke-width="1.800"/><ellipse cx="32" cy="15" rx="11" ry="6.500" transform="rotate(42 32 15)" fill="#b80c04" stroke="#5c0000" stroke-width="1.800"/></svg></span>
      <i class="gsep"></i>
      <svg class="ic teal" viewBox="0 0 46 46"><path d="M10 10Q2 22 6 38Q14 48 24 42L12 28Z" fill="#777" opacity=".6"/><path d="M14 12L22 3Q32 0 41 13Q44 19 42 24L30 40Q20 42 12 34Q14 24 18 18Z" fill="url(#gTeal)" stroke="#034" stroke-width="1.800"/><ellipse cx="32" cy="13" rx="11" ry="6.500" transform="rotate(45 32 13)" fill="#0cd4d0" stroke="#045" stroke-width="1.500"/><path d="M2 3L16 11M22 40L40 44" stroke="#111" stroke-width="2"/></svg>
      <svg class="frag" viewBox="0 0 6 46"><path d="M6 12Q0 23 6 34Z" fill="#666"/></svg>
    </div>
    <svg class="canvas" viewBox="976 569 2248 1181">
      <rect x="976" y="569" width="2248" height="1181" fill="url(#hatch)"/>
      <rect x="1069" y="595" width="2400" height="1400" opacity=".36" filter="url(#soft)"/>
      <rect x="1091" y="616" width="2400" height="1400" fill="#d4cfc8"/>
      <path d="M1392 569V1750M1692 569V1750M1992 569V1750M2292 569V1750M2592 569V1750M2892 569V1750M3192 569V1750M1091 569V616M976 616H1091M976 716H3224M976 816H3224M976 916H3224M976 1016H3224M976 1116H3224M976 1216H3224M976 1316H3224M976 1416H3224M976 1516H3224M976 1616H3224M976 1716H3224" stroke="#000" stroke-opacity=".13" stroke-width="2"/>
      <path d="M3224 616H1091V1750" fill="none" stroke="#000" stroke-width="2"/>
      <rect x="965" y="1741.500" width="24" height="20" fill="#d8d8d8" stroke="#000"/>

      <g class="note">
        <text x="1171" y="774" textLength="879">Step 1: Double click this yellow panel</text>
        <text x="1170" y="830.500" textLength="888">and paste the path to your folder here</text>
        <text x="1165" y="974" textLength="1068">Step 2: Set this toggle to True by double click</text>
        <text x="1162" y="1127.500" textLength="1275">Step 3: Check if a script named "HelloWorld-xxxxx.cs"</text>
        <text x="1162" y="1184" textLength="1442">appears in your folder, open it with Visual Studio Code (VSC)</text>
        <text x="1160" y="1305.500" textLength="1607">Step 4: Modify "hello, world" at line 57 in VSC to display other words</text>
        <text x="1161" y="1424" textLength="1225">Step 5: Use the sliders below to change the position</text>
      </g>

      <rect x="2863" y="676.500" width="162" height="433" fill="#bba5e8" stroke="#9c8cc2" stroke-width="2"/>

      <g class="wires">
        <path d="M2698 795C2800 795 2795 802.500 2897 802.500"/>
        <path d="M2584 952.500C2740 952.500 2741 734.500 2897 734.500"/>
        <path d="M3014 1002.500C3321 1002.500 2753 1452.500 3060 1452.500"/>
        <path d="M2895 1506.500C2977 1506.500 2978 1412.500 3060 1412.500"/>
        <path d="M2409 1534.500C2574 1534.500 2574 1467 2739 1467"/>
        <path d="M2411 1594.500C2575 1594.500 2575 1507 2739 1507"/>
        <path d="M2411 1652.500C2575 1652.500 2575 1547 2739 1547"/>
      </g>

      <g class="ports">
        <circle cx="2368" cy="795" r="8"/><circle cx="2689" cy="795" r="8"/><circle cx="2575" cy="952.500" r="8"/>
        <circle cx="2906" cy="734.500" r="8"/><circle cx="2906" cy="802.500" r="8"/><circle cx="3005" cy="1002.500" r="8"/>
        <circle cx="3069" cy="1412.500" r="8"/><circle cx="3069" cy="1452.500" r="8"/><circle cx="3069" cy="1492.500" r="8"/>
        <circle cx="2748" cy="1467" r="8"/><circle cx="2748" cy="1507" r="8"/><circle cx="2748" cy="1547" r="8"/><circle cx="2885.500" cy="1506.500" r="8"/>
        <circle cx="2400.500" cy="1534.500" r="8"/><circle cx="2403" cy="1594.500" r="8"/><circle cx="2403" cy="1652.500" r="8"/>
      </g>

      <rect x="2369" y="695" width="320" height="200" rx="6" fill="#fff95a" stroke="#1e1e14" stroke-width="2.200"/>
      <path d="M2374 698H2684" stroke="#fffde0" stroke-width="3"/>
      <g class="mono"><text x="2375" y="786" textLength="290">C:\Users\xdd44\Dropbox</text><text x="2398" y="811" textLength="248">(MIT)\IAP\0\Scripts</text></g>

      <rect x="2367" y="931" width="208" height="43" rx="5" fill="url(#gBlueGreyS)" stroke="#26262a" stroke-width="2.200"/>
      <rect x="2479" y="935" width="92" height="36" rx="2" fill="url(#gTog)" stroke="#000" stroke-width="2.400"/><rect x="2481.500" y="937.500" width="87" height="31" fill="none" stroke="#777"/>
      <text class="lab" x="2388" y="960" textLength="65">Toggle</text>
      <text class="true" x="2493" y="957.500" textLength="63">True</text>

      <path d="M2912 697H2995L3003 704.500L2995 712.500L3003 720.500L2995 728.500L3003 736.500L2995 744.500L3003 752.500L2995 760.500L3003 768.500L2995 776.500L3003 784.500L2995 792.500L3003 800.500L2995 808.500L3003 816.500L2995 824.500L3003 832.500L2995 841L2997 843H2912Q2907 843 2907 838V702Q2907 697 2912 697Z" fill="url(#gBlueGrey)" stroke="#26262a" stroke-width="2.200"/>
      <rect x="2942.500" y="700.500" width="48" height="138" rx="5" fill="url(#gCaps)" stroke="#000" stroke-width="2.200"/>
      <text class="lab" x="2922" y="741">E</text><text class="lab" x="2922" y="809">F</text>
      <text class="cap" transform="translate(2975 827.500) rotate(-90)" textLength="118" lengthAdjust="spacingAndGlyphs">ScriptPar</text>
      <path d="M2914 844H2987Q2983.500 845 2983.500 850V857Q2983.500 863 2978 863H2923Q2917.500 863 2917.500 857V850Q2917.500 845 2914 844Z" fill="#222"/>
      <text class="tiny" x="2919" y="857" textLength="62">Watching</text>

      <path d="M3000 915H2883L2875 922.500L2883 930.500L2875 938.500L2883 946.500L2875 954.500L2883 962.500L2875 970.500L2883 978.500L2875 986.500L2883 994.500L2875 1002.500L2883 1010.500L2875 1018.500L2883 1026.500L2875 1034.500L2883 1042.500L2875 1050.500L2883 1058.500L2875 1066.500L2883 1074.500L2875 1082.500L2883 1091H3000Q3005 1091 3005 1086V920Q3005 915 3000 915Z" fill="url(#gLight)" stroke="#2a2a2a" stroke-width="2.200"/>
      <rect x="2886.500" y="918.500" width="48" height="168" rx="5" fill="url(#gCaps)" stroke="#000" stroke-width="2.200"/>
      <text class="cap" transform="translate(2919 1075.500) rotate(-90)" textLength="145" lengthAdjust="spacingAndGlyphs">HelloWorld</text>
      <text class="lab" x="2944" y="1010" textLength="40">Text</text>

      <path d="M3075 1388.500H3161L3167 1396.500L3160 1404.500L3167 1412.500L3160 1420.500L3167 1428.500L3160 1436.500L3167 1444.500L3160 1452.500L3167 1460.500L3160 1468.500L3167 1476.500L3160 1484.500L3167 1492.500L3160 1500.500L3167 1508.500L3161 1516.500H3075Q3070 1516.500 3070 1511.500V1393.500Q3070 1388.500 3075 1388.500Z" fill="url(#gLight)" stroke="#2a2a2a" stroke-width="2.200"/>
      <rect x="3106.500" y="1392.500" width="48" height="120" rx="5" fill="url(#gCaps)" stroke="#000" stroke-width="2.200"/>
      <text class="lab" x="3086.500" y="1420">L</text><text class="lab" x="3085.500" y="1459.500">T</text><text class="lab" x="3083.500" y="1499.500">C</text>
      <text class="cap" transform="translate(3139 1475) rotate(-90)" textLength="45" lengthAdjust="spacingAndGlyphs">Tag</text>

      <rect x="2749" y="1442.500" width="136" height="128" rx="5" fill="url(#gBlueGrey)" stroke="#26262a" stroke-width="2.200"/>
      <rect x="2786.500" y="1446.500" width="48" height="120" rx="5" fill="url(#gCaps)" stroke="#000" stroke-width="2.200"/>
      <text class="lab" x="2763" y="1474">X</text><text class="lab" x="2763.500" y="1514">Y</text><text class="lab" x="2763.500" y="1554">Z</text><text class="lab" x="2843" y="1513">Pt</text>
      <text class="cap" transform="translate(2819 1519) rotate(-90)" textLength="28" lengthAdjust="spacingAndGlyphs">Pt</text>

      <g class="slider">
        <rect x="2011" y="1514.500" width="390" height="40" rx="4" fill="url(#gLight)"/>
        <path d="M2161 1514.500H2015Q2011 1514.500 2011 1518.500V1550.500Q2011 1554.500 2015 1554.500H2161Z" fill="url(#gBlueGreyS)"/>
        <path class="rim" d="M2161 1514.500V1554.500"/><rect class="rim" x="2011" y="1514.500" width="390" height="40" rx="4"/>
        <path class="tick" d="M2198 1534.500H2381M2220.500 1528V1534M2240.500 1528V1534M2260.500 1528V1534M2280.500 1524V1534M2300.500 1528V1534M2320.500 1528V1534M2340.500 1528V1534M2360.500 1528V1534M2380.500 1524V1534"/>
        <path class="dia" d="M2180.500 1528L2186.500 1534.500L2180.500 1541L2174.500 1534.500Z"/>
        <text class="lab" x="2023" y="1541.500" textLength="123">X coordinate</text><text class="lab" x="2195.500" y="1541.500">0</text>
      </g>
      <g class="slider">
        <rect x="2013" y="1574.500" width="390" height="40" rx="4" fill="url(#gLight)"/>
        <path d="M2161 1574.500H2017Q2013 1574.500 2013 1578.500V1610.500Q2013 1614.500 2017 1614.500H2161Z" fill="url(#gBlueGreyS)"/>
        <path class="rim" d="M2161 1574.500V1614.500"/><rect class="rim" x="2013" y="1574.500" width="390" height="40" rx="4"/>
        <path class="tick" d="M2198 1594.500H2383M2220.500 1588V1594M2240.500 1588V1594M2260.500 1588V1594M2280.500 1584V1594M2302.500 1588V1594M2322.500 1588V1594M2342.500 1588V1594M2362.500 1588V1594M2382.500 1584V1594"/>
        <path class="dia" d="M2180.500 1588L2186.500 1594.500L2180.500 1601L2174.500 1594.500Z"/>
        <text class="lab" x="2025" y="1601.500" textLength="122">Y coordinate</text><text class="lab" x="2195.500" y="1601.500">0</text>
      </g>
      <g class="slider">
        <rect x="2013" y="1632.500" width="390" height="40" rx="4" fill="url(#gLight)"/>
        <path d="M2163 1632.500H2017Q2013 1632.500 2013 1636.500V1668.500Q2013 1672.500 2017 1672.500H2163Z" fill="url(#gBlueGreyS)"/>
        <path class="rim" d="M2163 1632.500V1672.500"/><rect class="rim" x="2013" y="1632.500" width="390" height="40" rx="4"/>
        <path class="tick" d="M2200 1652.500H2383M2222.500 1646V1652M2242.500 1646V1652M2262.500 1646V1652M2282.500 1642V1652M2302.500 1646V1652M2322.500 1646V1652M2342.500 1646V1652M2362.500 1646V1652M2382.500 1642V1652"/>
        <path class="dia" d="M2182.500 1646L2188.500 1652.500L2182.500 1659L2176.500 1652.500Z"/>
        <text class="lab" x="2025" y="1659.500" textLength="122">Z coordinate</text><text class="lab" x="2197.500" y="1659.500">0</text>
      </g>
    </svg>
  </div>
</div>
</body>
</html>
```

FILE: styles.css
```css
* { box-sizing: border-box; }
body { margin: 0; background: #ebecf0; font-family: "Open Sans", "Noto Sans", sans-serif; overflow: hidden; }
svg { display: block; flex: none; }
.defs { position: absolute; width: 0; height: 0; }
.desktop { position: relative; width: 3224px; height: 1750px; overflow: hidden; }

/* Rhino main window */
.rhino { display: flex; flex-direction: column; height: 1750px; background: #ebecf0; border-top: 2px solid #f2f3f1; }
.r-menu {
  display: grid; height: 43px; padding-left: 33px; border-bottom: 1px solid #c2c8de; color: #2b2b2f;
  grid-template-columns: 143px 127px 113px 138px 156px 174px 191px 165px 171px 171px 223px 189px 137px 159px 100px;
  font-size: 24px; line-height: 48px; letter-spacing: -.5px; white-space: nowrap;
}
.r-bar { display: flex; height: 63px; padding-top: 3px; border-bottom: 1px solid #d8dae2; }
.r-bar svg { width: 56px; height: 56px; }
.r-bar svg.edge { width: 11px; }
.r-bar2 { height: 65px; padding-top: 5px; }
.r-sep { width: 1px; height: 54px; margin: 0 3px; background: linear-gradient(#ebecf0, #b4b6bc, #ebecf0); }
.help-q { font: bold 34px "Liberation Serif", serif; fill: #fff; text-anchor: middle; }
.r-cmd { height: 147px; padding: 2px 0 9px; border-bottom: 1px solid #c2c8de; }
.r-hist { position: relative; height: 100px; padding-top: 5px; background: #fff; border-bottom: 1px solid #c2c8de; overflow: hidden; }
.r-hist p { margin: 0; height: 31.700px; font-size: 24px; line-height: 31.700px; letter-spacing: -.5px; white-space: pre; color: #0c0c0c; }
.r-hist .opts { margin-left: -10px; word-spacing: 1.300px; letter-spacing: -.62px; }
.r-hist .blue { color: #4a90c8; margin-left: -11px; }
.r-hist .scrap { position: absolute; left: 24px; top: 0; width: 422px; height: 2px; border: solid #333; border-width: 0 2px; }
.r-prompt { height: 35px; background: #fff; }
.r-view { width: 976px; height: 1430px; }
.r-view text { font: 24px "Liberation Sans", sans-serif; fill: #950000; }

/* Grasshopper window */
.gh {
  position: absolute; left: 974px; top: 129px; width: 2260px; height: 1640px; overflow: visible;
  border: 2px solid #a9aaae; border-left-color: #85868a; border-radius: 17px 0 0 0; background: #efefef;
  box-shadow: 0 4px 60px rgba(0,0,0,.32);
}
.gh-title { display: flex; justify-content: space-between; height: 56px; padding: 0 53px 0 11px; background: #f3f3f3; border-radius: 15px 0 0 0; color: #8e8e8e; font-size: 24px; line-height: 56px; letter-spacing: -.7px; }
.gh-title .min { width: 20px; height: 2px; margin-top: 26px; background: #959595; }
.gh-menu { display: grid; grid-template-columns: 63px 66px 77px 103px 115px 80px; height: 52px; padding-left: 19px; line-height: 54px; font-size: 24px; letter-spacing: -.5px; color: #000; background: linear-gradient(90deg, #f0f0f0, #fbfbfb 85%); }
.gh-tabs {
  display: grid; height: 45px; padding-left: 1px; border-bottom: 1px solid #969696; background: #efefef; white-space: nowrap;
  grid-template-columns: 120px 90px 75px 94px 89px 107px 85px 114px 129px 103px 64px 147px 167px 137px 80px;
  font: 21px/46px "Liberation Sans", sans-serif; color: #626262;
}
.gh-tabs b { width: 107px; height: 46px; padding-left: 13px; line-height: 42px; font-weight: 400; color: #000; background: linear-gradient(#fff 60%, #dadada); border: 1px solid #989898; border-bottom: 0; border-radius: 11px 11px 0 0; }
.ribbon { display: flex; align-items: flex-start; gap: 7.500px; height: 228px; padding: 3px 0 0 5.500px; background: linear-gradient(#d7d7d7, #f0f0f0 85%); }
.group { height: 201px; border: 1px solid #868686; border-radius: 8px; overflow: hidden; background: linear-gradient(#d9d9d9, #ececec); box-shadow: inset 1px 1px 0 #f4f4f4; }
.group.short { height: 145px; }
.cells { display: flex; height: 172px; padding: 2px 4px 0 2px; }
.short .cells { height: 116px; }
.cells > i { width: 20px; height: 160px; background: linear-gradient(transparent, #b4b4b4 40%, transparent) 10px 0/1px 100% no-repeat; }
.short .cells > i { height: 108px; }
.col { display: grid; grid-template-rows: repeat(3, 56px); grid-auto-flow: column; grid-auto-columns: 56px; align-content: start; }
.short .col { grid-template-rows: repeat(2, 56px); }
.group:nth-child(2) .cells { padding: 2px 4px 0 3px; }
.group:nth-child(3) .cells { padding-right: 5px; }
.col svg { width: 56px; height: 56px; }
.glyph { font: bold 30px "Liberation Sans", sans-serif; fill: #fff; text-anchor: middle; }
.glyph.serif { font-family: "Liberation Serif", serif; font-size: 33px; }
.roll { font: bold 32px "Liberation Sans", sans-serif; fill: #333; text-anchor: middle; }
.roll.dim { fill: #777; }
.group footer { position: relative; height: 28px; padding-right: 21px; text-align: center; color: #fff; font: 20.500px/25px "Liberation Sans", sans-serif; background: linear-gradient(#303030, #161616); }
.group footer svg { position: absolute; right: 3px; top: 6px; width: 16px; height: 16px; }
.gh-bar { display: flex; align-items: center; height: 57px; padding: 0 0 0 4px; border-top: 2px solid #747474; background: linear-gradient(#fff, #f2f2f2); }
.ic { width: 46px; height: 46px; margin-top: -2px; }
.ic.save { margin-left: 7px; }
.gsep { width: 1px; height: 45px; margin: 0 5px 0 8px; background: #c4c4c4; }
.combo { display: flex; align-items: center; justify-content: space-between; width: 268px; height: 40px; padding: 0 9px 0 3px; background: #fff; border: 1px solid #9a9a9a; border-radius: 2px; font-size: 24px; letter-spacing: -.8px; }
.combo svg { width: 16px; height: 10px; }
.ext { margin-left: 5px; }
.arr { margin: 2px 11px 0; border: solid transparent; border-width: 6px 5px 0; border-top-color: #000; }
.brush { margin-left: -2px; }
.push { flex: 0 0 1428px; }
.ic.wire { margin-left: 7px; }
.sel { display: flex; width: 52px; height: 52px; margin: -1px 0 0 5px; padding: 4px 2px; border: 1px solid #0078d7; }
.ic.teal { margin-left: 7px; }
.frag { width: 6px; height: 46px; }
.canvas { width: 2248px; height: 1181px; }

.note text { font: 51px "Liberation Sans", sans-serif; fill: #000; stroke: #000; stroke-width: 1.400px; }
.wires path { fill: none; stroke: #000; stroke-opacity: .6; stroke-width: 6px; }
.ports circle { fill: #fff; stroke: #000; stroke-width: 3.600px; }
.mono text { font: 22px "Liberation Mono", monospace; fill: #35560f; }
.true { font: 26px "Liberation Mono", monospace; fill: #d4d4d4; }
.lab { font-size: 20.500px; fill: #1c1c1c; }
.cap { font: bold 27px "Open Sans", sans-serif; fill: #fff; stroke: #fff; stroke-width: .4px; }
.tiny { font-size: 13.500px; fill: #ddd; }
.slider .rim { fill: none; stroke: #26262a; stroke-width: 2.200px; }
.slider .tick { fill: none; stroke: #aaa; }
.slider .dia { fill: #fff; stroke: #000; stroke-width: 2.400px; }
```
